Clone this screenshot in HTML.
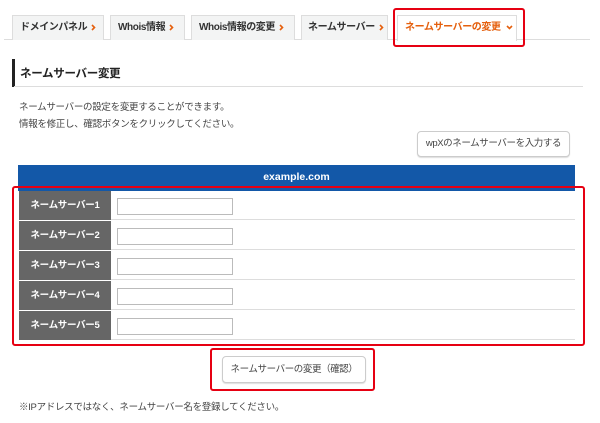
<!DOCTYPE html>
<html><head><meta charset="utf-8"><style>
*{box-sizing:border-box;margin:0;padding:0}
body{width:600px;height:423px;background:#fff;font-family:"Liberation Sans","Noto Sans CJK JP",sans-serif;color:#333;position:relative;overflow:hidden;font-size:10px}
.a{position:absolute;white-space:nowrap}
.tab{position:absolute;top:15px;height:25px;background:#f3f4f4;border:1px solid #ddd;border-bottom:none;font-weight:bold;font-size:10px;letter-spacing:-0.4px;line-height:24px;padding-left:7px;color:#333;white-space:nowrap;overflow:hidden}
.tab svg{margin-left:4px;vertical-align:middle}
.red{position:absolute;border:2px solid #e60012;border-radius:3px}
.row{position:absolute;left:19px;width:556px;height:29px;border-bottom:1px solid #ddd;background:#fff}
.row .l{position:absolute;left:0;top:0;width:92px;height:29px;background:#666;color:#fff;font-weight:bold;font-size:9.5px;letter-spacing:-0.3px;line-height:29px;text-align:center;white-space:nowrap}
.row .i{position:absolute;left:98px;top:7px;width:116px;height:17px;border:1px solid #bbb;background:#fff}
.btn{position:absolute;border:1px solid #ccc;border-radius:4px;background:#fff;font-size:9.5px;letter-spacing:-0.4px;text-align:center;box-shadow:0 1px 1px #ddd;white-space:nowrap;color:#444}
</style></head><body>
<div class="a" style="left:4px;top:39px;width:586px;height:1px;background:#ddd"></div>
<div class="tab" style="left:12px;width:92px">ドメインパネル<svg width="5" height="7" viewBox="0 0 5 7"><path d="M1 1l2.5 2.5L1 6" stroke="#e5600e" stroke-width="1.6" fill="none"/></svg></div>
<div class="tab" style="left:110px;width:75px">Whois情報<svg width="5" height="7" viewBox="0 0 5 7"><path d="M1 1l2.5 2.5L1 6" stroke="#e5600e" stroke-width="1.6" fill="none"/></svg></div>
<div class="tab" style="left:191px;width:104px">Whois情報の変更<svg width="5" height="7" viewBox="0 0 5 7"><path d="M1 1l2.5 2.5L1 6" stroke="#e5600e" stroke-width="1.6" fill="none"/></svg></div>
<div class="tab" style="left:301px;width:87px;padding-left:6px">ネームサーバー<svg width="5" height="7" viewBox="0 0 5 7"><path d="M1 1l2.5 2.5L1 6" stroke="#e5600e" stroke-width="1.6" fill="none"/></svg></div>
<div class="tab" style="left:397px;width:120px;background:#fff;height:26px;color:#e5600e;padding-left:7px">ネームサーバーの変更<svg width="7" height="5" viewBox="0 0 7 5" style="margin-left:5px"><path d="M1 1l2.5 2.5L6 1" stroke="#e5600e" stroke-width="1.6" fill="none"/></svg></div>
<div class="red" style="left:393px;top:8px;width:132px;height:39px"></div>

<div class="a" style="left:12px;top:59px;width:3px;height:28px;background:#222"></div>
<div class="a" style="left:14px;top:86px;width:569px;height:1px;background:#ddd"></div>
<div class="a" style="left:20px;top:65px;font-size:11.5px;font-weight:bold;color:#222;letter-spacing:-0.3px">ネームサーバー変更</div>
<div class="a" style="left:19px;top:99px;line-height:17px;font-size:9.5px;letter-spacing:-0.3px;color:#444">ネームサーバーの設定を変更することができます。<br>情報を修正し、確認ボタンをクリックしてください。</div>
<div class="btn" style="left:417px;top:131px;width:153px;height:26px;line-height:24px">wpXのネームサーバーを入力する</div>

<div class="a" style="left:18px;top:165px;width:557px;height:26px;background:#1358a8;color:#fff;font-weight:bold;font-size:10.5px;text-align:center;line-height:25px">example.com</div>
<div class="row" style="top:191px"><div class="l">ネームサーバー1</div><div class="i"></div></div>
<div class="row" style="top:221px"><div class="l">ネームサーバー2</div><div class="i"></div></div>
<div class="row" style="top:251px"><div class="l">ネームサーバー3</div><div class="i"></div></div>
<div class="row" style="top:281px"><div class="l">ネームサーバー4</div><div class="i"></div></div>
<div class="row" style="top:311px"><div class="l">ネームサーバー5</div><div class="i"></div></div>
<div class="red" style="left:12px;top:186px;width:573px;height:160px"></div>

<div class="btn" style="left:222px;top:356px;width:144px;height:27px;line-height:25px">ネームサーバーの変更（確認）</div>
<div class="red" style="left:210px;top:348px;width:165px;height:43px"></div>
<div class="a" style="left:19px;top:399px;font-size:9.5px;letter-spacing:-0.3px;color:#444">※IPアドレスではなく、ネームサーバー名を登録してください。</div>
</body></html>
